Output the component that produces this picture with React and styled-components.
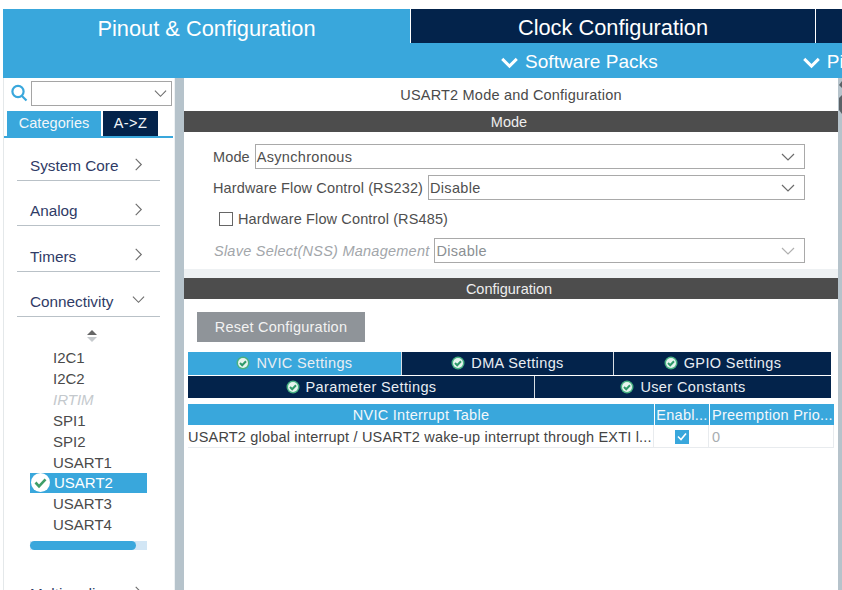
import React from "react";
import styled, { createGlobalStyle } from "styled-components";

const Global = createGlobalStyle`
  html, body { margin: 0; padding: 0; width: 842px; height: 590px; overflow: hidden; background: #fff; }
  * { box-sizing: border-box; }
  body { font-family: "Liberation Sans", Arial, sans-serif; color: #3c3c3c; }
`;
const BLUE = "#39a7dc";
const NAVY = "#03234b";

const Page = styled.div`width: 842px; height: 590px; overflow: hidden; display: flex; flex-direction: column; padding-top: 9px;`;
const Header = styled.header`display: grid; grid-template-columns: 407px 1fr; margin-left: 3px; height: 69px; background: ${BLUE};`;
const MainTab = styled.div`
  height: ${p => (p.$tall ? "69px" : "34px")}; display: flex; align-items: center; justify-content: center;
  padding-top: ${p => (p.$tall ? "0" : "4px")}; padding-bottom: ${p => (p.$tall ? "30px" : "0")};
  font-size: 21.8px; color: #fff; background: ${p => (p.$tall ? BLUE : NAVY)};
`;
const HeaderRight = styled.div`display: flex; flex-direction: column;`;
const TopTabs = styled.div`display: grid; grid-template-columns: 1px 404px 1px 1fr; background: #fff;`;
const TabGap = styled.div`background: #fff; height: 34px;`;
const SubBar = styled.div`display: flex; height: 35px; align-items: center; padding-top: 3px; color: #fff; font-size: 19px; letter-spacing: .05px;`;
const SubItem = styled.div`
  display: flex; align-items: center; gap: 7px; white-space: nowrap; margin-left: ${p => p.$left}px;
`;
const Body = styled.div`flex: 1; display: flex; min-height: 0; background: #fff;`;
const Sidebar = styled.aside`
  width: 172px; margin-left: 3px; background: #fff; overflow: hidden;
  border-left: 1px solid #e4e8ea; border-right: 1px solid #eef1f3;
`;
const SearchRow = styled.div`display: flex; align-items: center; height: 28px; padding: 2px 0 0 7px; gap: 3px;`;
const Combo = styled.div`
  width: 141px; height: 25px; border: 1px solid #a5a5a5; background: #fff; display: flex; align-items: center; justify-content: flex-end; padding-right: 4px;
`;
const SideTabs = styled.div`display: flex; margin-top: 5px; padding-left: 3px; gap: 2px; border-bottom: 2px solid ${BLUE}; width: 169px;`;
const SideTab = styled.div`
  height: 25px; width: ${p => p.$w}px; display: flex; align-items: center; justify-content: center; padding-bottom: 1px;
  font-size: 14.5px; color: #f2f6f9; letter-spacing: ${p => (p.$on ? ".05px" : ".45px")}; background: ${p => (p.$on ? BLUE : NAVY)};
`;
const Cats = styled.div`padding-top: 14px;`;
const Cat = styled.div`
  margin: 0 14px 16.3px 13px; height: 29px; border-bottom: 1px solid #b9c1c7; display: flex; align-items: center; justify-content: space-between; padding: 0 15px 0 13px;
  font-size: 15.3px; color: #2f3b66;
`;
const CatIcon = styled.span`display: flex; margin-bottom: 4px;`;
const Sort = styled.div`display: flex; justify-content: center; margin: -3px 0 0 0; padding-right: 4px; height: 14px; width: 180px;`;
const List = styled.ul`list-style: none; margin: 3px 0 0 26px; padding: 0; width: 117px;`;
const Item = styled.li`
  height: 20.9px; display: flex; align-items: center; padding-left: ${p => (p.$sel ? "1px" : "23px")}; gap: 4px;
  font-size: 15px; font-style: ${p => (p.$off ? "italic" : "normal")};
  color: ${p => (p.$sel ? "#fff" : p.$off ? "#c4c9cd" : "#4a4a4a")};
  background: ${p => (p.$sel ? BLUE : "transparent")};
`;
const Track = styled.div`margin: 6px 0 30px 26px; width: 117px; height: 9px; background: #d2e6f5;`;
const Thumb = styled.div`width: 106px; height: 9px; border-radius: 5px; background: ${BLUE};`;
const Divider = styled.div`width: 9px; background: #b6c3cb;`;
const Main = styled.main`width: 654px; display: flex; flex-direction: column; background: #eef1f3;`;
const Scroll = styled.div`width: 4px; background: #b6c3cb; overflow: hidden; display: flex;`;
const Panel = styled.section`background: #fff; height: ${p => p.$h}px; margin-top: ${p => p.$mt ?? 0}px; ${p => p.$grow && "flex: 1;"}`;
const PanelTitle = styled.div`height: 33px; display: flex; align-items: center; justify-content: center; font-size: 14.5px; color: #4a4a4a; letter-spacing: .2px;`;
const Bar = styled.div`height: 21px; background: #4d4d4d; color: #eee; display: flex; align-items: center; justify-content: center; padding-right: 4px; font-size: 14.5px;`;
const Form = styled.div`padding: 12px 33px 0 29px; display: flex; flex-direction: column;`;
const Row = styled.div`display: flex; align-items: center; height: 25px; margin-bottom: ${p => p.$mb ?? 6}px; font-size: 14.5px; letter-spacing: .13px; color: #4f4f4f;`;
const Label = styled.span`
  white-space: nowrap; padding-right: 5px; margin-left: ${p => p.$ml ?? 0}px;
  ${p => p.$off && "font-style: italic; color: #a2a6aa; letter-spacing: .24px;"}
`;
const Select = styled.div`
  flex: 1; height: 25px; border: 1px solid #a9a9a9; display: flex; align-items: center; justify-content: space-between; padding: 0 9px 0 1px;
  color: ${p => (p.$off ? "#8b8f93" : "#4f4f4f")}; background: #fff; letter-spacing: .3px;
`;
const CheckRow = styled(Row)`padding-left: 6px; gap: 5px; margin-bottom: 7px; padding-top: 1px;`;
const Box = styled.span`width: 14px; height: 14px; border: 1px solid #666; display: block;`;
const Reset = styled.div`
  margin: 13px 0 0 13px; width: 168px; height: 30px; background: #8f9499; color: #f2f2f2; font-size: 14.5px; letter-spacing: .22px;
  display: flex; align-items: center; justify-content: center;
`;
const TabsWrap = styled.div`margin: 10px 0 0 4px; width: 643px; display: flex; flex-direction: column; gap: 1px;`;
const TabRow = styled.div`display: grid; grid-template-columns: ${p => p.$cols}; gap: 1px; background: #d8dee4;`;
const Tab = styled.div`
  height: ${p => p.$h}px; display: flex; align-items: center; justify-content: center; gap: 6px; padding-bottom: 1px;
  color: #e9eef3; background: ${p => (p.$on ? BLUE : NAVY)}; font-size: 14.5px; letter-spacing: .38px;
`;
const Table = styled.div`margin: 6px 0 0 4px; width: 646px;`;
const TRow = styled.div`display: grid; grid-template-columns: 466px 54px 124px; gap: 1px; height: ${p => p.$h}px; ${p => p.$body && "border-bottom: 1px solid #e8ebee;"}`;
const Th = styled.div`
  background: ${BLUE}; color: #f4f8fb; font-size: 14.5px; letter-spacing: .27px; display: flex; align-items: center; justify-content: ${p => p.$left ? "flex-start" : "center"}; padding-left: ${p => p.$left ? "2px" : "0"}; white-space: nowrap; overflow: hidden;
`;
const Td = styled.div`
  font-size: 14.5px; display: flex; align-items: center; justify-content: ${p => (p.$center ? "center" : "flex-start")}; padding-left: ${p => p.$pad ?? 0}px; padding-top: 1px;
  color: ${p => (p.$muted ? "#a8adb1" : "#444")}; white-space: nowrap; overflow: hidden; letter-spacing: .19px;
  border-right: 1px solid #e8ebee;
`;
const Tick = styled.span`
  width: 14px; height: 14px; background: ${BLUE}; display: flex; align-items: center; justify-content: center;
`;

const Chevron = ({ dir = "down", size = 14, color = "#6c6c6c", w = 1.2 }) => (
  <svg width={size} height={size} viewBox="0 0 14 14" fill="none" stroke={color} strokeWidth={w}>
    {dir === "down" ? <path d="M1 4l6 6 6-6" /> : <path d="M4 1l6 6-6 6" />}
  </svg>
);
const TabCheck = () => (
  <svg width="14" height="14" viewBox="0 0 14 14">
    <circle cx="7" cy="7" r="6.5" fill="#48b183" />
    <circle cx="7" cy="7" r="5" fill="#e7f5ee" />
    <path d="M4 7l2.2 2.2L10 5.2" fill="none" stroke="#2f9a6a" strokeWidth="2" />
  </svg>
);
const SelCheck = () => (
  <svg width="19" height="19" viewBox="0 0 19 19">
    <circle cx="9.5" cy="9.5" r="9.5" fill="#fff" />
    <path d="M4.5 9.5l3.5 3.8 6.5-7" fill="none" stroke="#3f9e69" strokeWidth="2.6" />
  </svg>
);
const Search = () => (
  <svg width="17" height="18" viewBox="0 0 17 18" fill="none" stroke={BLUE} strokeWidth="2.2">
    <circle cx="7" cy="7.5" r="5.6" />
    <path d="M11 12l4.5 4.5" />
  </svg>
);
const SortIcon = () => (
  <svg width="10" height="12" viewBox="0 0 10 12">
    <path d="M5 0l5 5H0z" fill="#666" />
    <path d="M5 12L0 7h10z" fill="#c6cacd" />
  </svg>
);
const ScrollMarks = () => (
  <svg width="4" height="40" viewBox="0 0 4 40">
    <path d="M4 3L1 7l3 3z" fill="#5a6166" />
    <path d="M1 20l3-3v19l-3-4z" fill="#5a6166" />
  </svg>
);

const cats = ["System Core", "Analog", "Timers"];
const items = ["I2C1", "I2C2", "IRTIM", "SPI1", "SPI2", "USART1", "USART2", "USART3", "USART4"];

export default function App() {
  return (
    <Page>
      <Global />
      <Header>
        <MainTab $tall>Pinout &amp; Configuration</MainTab>
        <HeaderRight>
          <TopTabs>
            <TabGap />
            <MainTab>Clock Configuration</MainTab>
            <TabGap />
            <MainTab />
          </TopTabs>
          <SubBar>
            <SubItem $left={91}><Chevron size={17} color="#fff" w={2.4} />Software Packs</SubItem>
            <SubItem $left={145}><Chevron size={17} color="#fff" w={2.4} />Pinout</SubItem>
          </SubBar>
        </HeaderRight>
      </Header>
      <Body>
        <Sidebar>
          <SearchRow>
            <Search />
            <Combo><Chevron size={13} /></Combo>
          </SearchRow>
          <SideTabs>
            <SideTab $on $w={94}>Categories</SideTab>
            <SideTab $w={55}>A-&gt;Z</SideTab>
          </SideTabs>
          <Cats>
            {cats.map(c => <Cat key={c}>{c}<CatIcon><Chevron dir="right" size={13} /></CatIcon></Cat>)}
            <Cat>Connectivity<CatIcon><Chevron size={13} /></CatIcon></Cat>
            <Sort><SortIcon /></Sort>
            <List>
              {items.map(i => (
                <Item key={i} $sel={i === "USART2"} $off={i === "IRTIM"}>
                  {i === "USART2" && <SelCheck />}{i}
                </Item>
              ))}
            </List>
            <Track><Thumb /></Track>
            <Cat>Multimedia<CatIcon><Chevron dir="right" size={13} /></CatIcon></Cat>
          </Cats>
        </Sidebar>
        <Divider />
        <Main>
          <Panel $h={191}>
            <PanelTitle>USART2 Mode and Configuration</PanelTitle>
            <Bar>Mode</Bar>
            <Form>
              <Row><Label>Mode</Label><Select>Asynchronous<Chevron /></Select></Row>
              <Row><Label>Hardware Flow Control (RS232)</Label><Select>Disable<Chevron /></Select></Row>
              <CheckRow><Box />Hardware Flow Control (RS485)</CheckRow>
              <Row $mb={0}><Label $off $ml={1}>Slave Select(NSS) Management</Label><Select $off>Disable<Chevron color="#b0b0b0" /></Select></Row>
            </Form>
          </Panel>
          <Panel $grow $mt={9}>
            <Bar>Configuration</Bar>
            <Reset>Reset Configuration</Reset>
            <TabsWrap>
              <TabRow $cols="213px 211px 217px">
                <Tab $on $h={23}><TabCheck />NVIC Settings</Tab>
                <Tab $h={23}><TabCheck />DMA Settings</Tab>
                <Tab $h={23}><TabCheck />GPIO Settings</Tab>
              </TabRow>
              <TabRow $cols="346px 296px">
                <Tab $h={22}><TabCheck />Parameter Settings</Tab>
                <Tab $h={22}><TabCheck />User Constants</Tab>
              </TabRow>
            </TabsWrap>
            <Table>
              <TRow $h={21}>
                <Th>NVIC Interrupt Table</Th>
                <Th>Enabl...</Th>
                <Th $left>Preemption Prio...</Th>
              </TRow>
              <TRow $h={23} $body>
                <Td>USART2 global interrupt / USART2 wake-up interrupt through EXTI l...</Td>
                <Td $center><Tick><svg width="10" height="9" viewBox="0 0 10 9" fill="none" stroke="#fff" strokeWidth="1.6"><path d="M1 4.5l3 3 5-6" /></svg></Tick></Td>
                <Td $muted $pad={2}>0</Td>
              </TRow>
            </Table>
          </Panel>
        </Main>
        <Scroll><ScrollMarks /></Scroll>
      </Body>
    </Page>
  );
}
